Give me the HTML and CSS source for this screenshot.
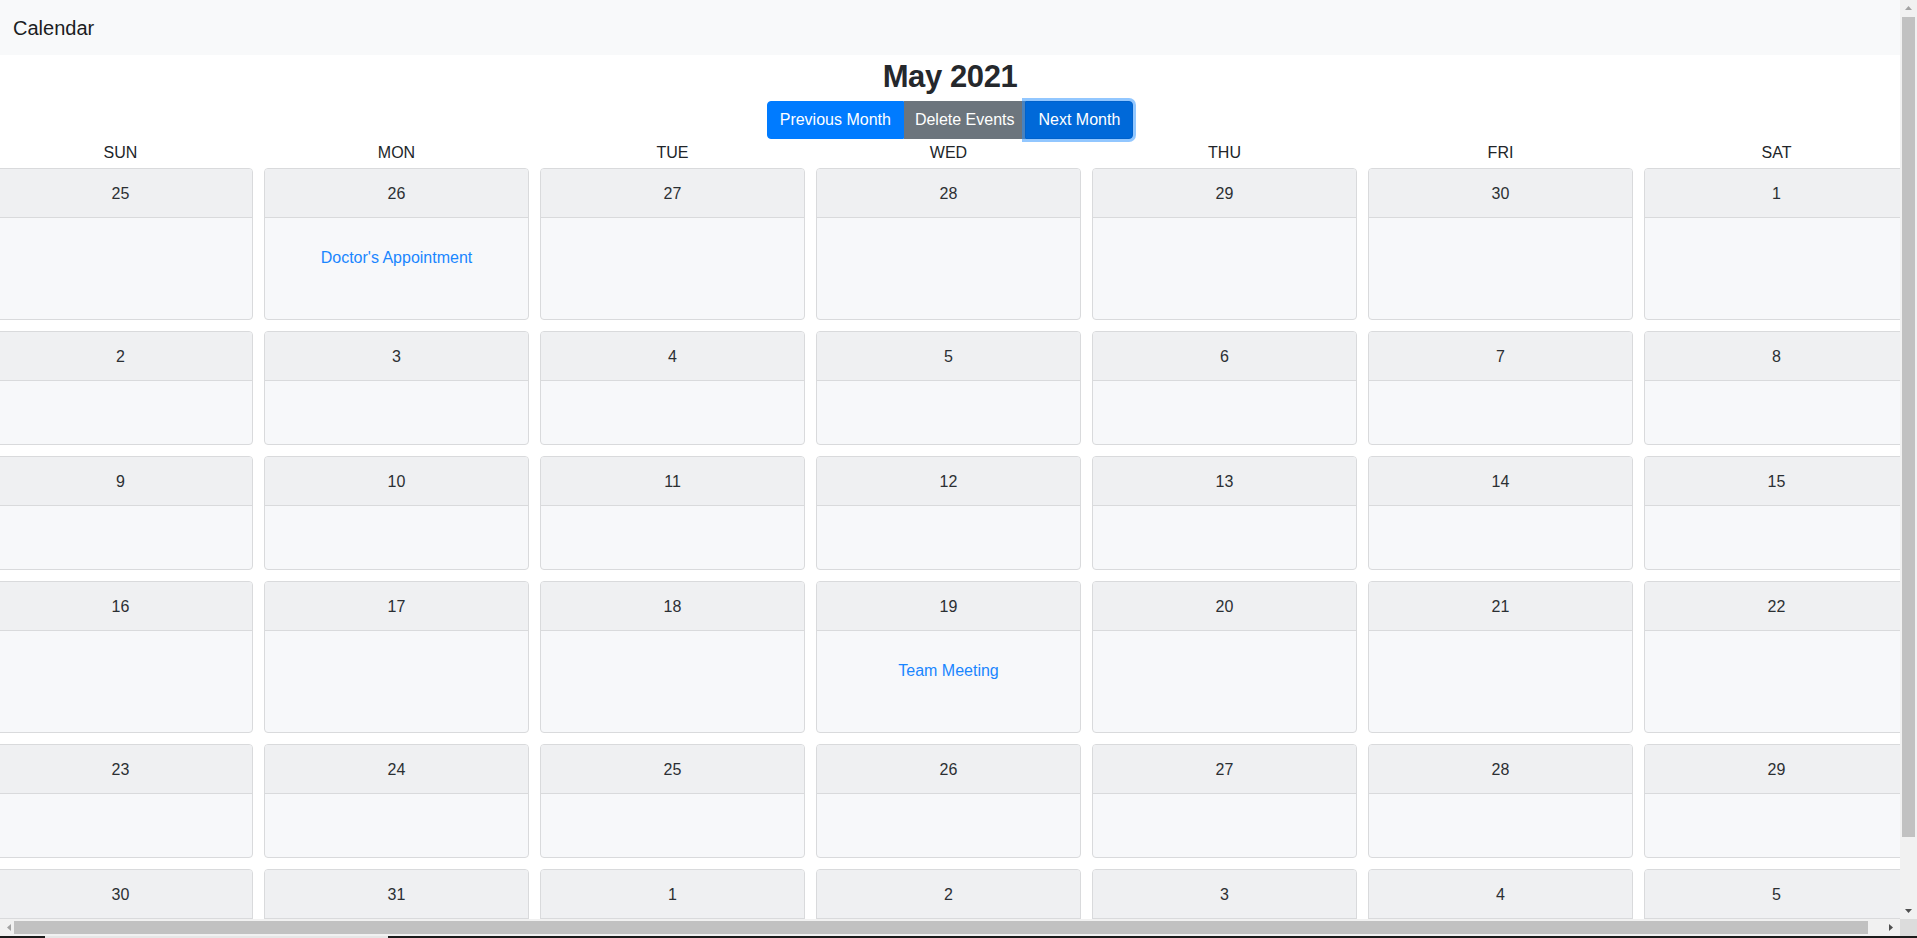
FILE: index.html
```html
<!DOCTYPE html>
<html lang="en">
<head>
<meta charset="utf-8">
<title>Calendar</title>
<link rel="stylesheet" href="styles.css">
</head>
<body>
<div class="page">
  <nav class="navbar"><span class="brand">Calendar</span></nav>
  <h1 class="title">May 2021</h1>
  <div class="btn-group">
    <button class="btn btn-primary first">Previous Month</button>
    <button class="btn btn-secondary">Delete Events</button>
    <button class="btn btn-focus last">Next Month</button>
  </div>
  <div class="weekdays">
    <div>SUN</div><div>MON</div><div>TUE</div><div>WED</div><div>THU</div><div>FRI</div><div>SAT</div>
  </div>
  <div class="month">
    <div class="day"><div class="day-head">25</div><div class="day-body"></div></div>
    <div class="day"><div class="day-head">26</div><div class="day-body"><div class="event">Doctor's Appointment</div></div></div>
    <div class="day"><div class="day-head">27</div><div class="day-body"></div></div>
    <div class="day"><div class="day-head">28</div><div class="day-body"></div></div>
    <div class="day"><div class="day-head">29</div><div class="day-body"></div></div>
    <div class="day"><div class="day-head">30</div><div class="day-body"></div></div>
    <div class="day"><div class="day-head">1</div><div class="day-body"></div></div>

    <div class="day"><div class="day-head">2</div><div class="day-body"></div></div>
    <div class="day"><div class="day-head">3</div><div class="day-body"></div></div>
    <div class="day"><div class="day-head">4</div><div class="day-body"></div></div>
    <div class="day"><div class="day-head">5</div><div class="day-body"></div></div>
    <div class="day"><div class="day-head">6</div><div class="day-body"></div></div>
    <div class="day"><div class="day-head">7</div><div class="day-body"></div></div>
    <div class="day"><div class="day-head">8</div><div class="day-body"></div></div>

    <div class="day"><div class="day-head">9</div><div class="day-body"></div></div>
    <div class="day"><div class="day-head">10</div><div class="day-body"></div></div>
    <div class="day"><div class="day-head">11</div><div class="day-body"></div></div>
    <div class="day"><div class="day-head">12</div><div class="day-body"></div></div>
    <div class="day"><div class="day-head">13</div><div class="day-body"></div></div>
    <div class="day"><div class="day-head">14</div><div class="day-body"></div></div>
    <div class="day"><div class="day-head">15</div><div class="day-body"></div></div>

    <div class="day"><div class="day-head">16</div><div class="day-body"></div></div>
    <div class="day"><div class="day-head">17</div><div class="day-body"></div></div>
    <div class="day"><div class="day-head">18</div><div class="day-body"></div></div>
    <div class="day"><div class="day-head">19</div><div class="day-body"><div class="event">Team Meeting</div></div></div>
    <div class="day"><div class="day-head">20</div><div class="day-body"></div></div>
    <div class="day"><div class="day-head">21</div><div class="day-body"></div></div>
    <div class="day"><div class="day-head">22</div><div class="day-body"></div></div>

    <div class="day"><div class="day-head">23</div><div class="day-body"></div></div>
    <div class="day"><div class="day-head">24</div><div class="day-body"></div></div>
    <div class="day"><div class="day-head">25</div><div class="day-body"></div></div>
    <div class="day"><div class="day-head">26</div><div class="day-body"></div></div>
    <div class="day"><div class="day-head">27</div><div class="day-body"></div></div>
    <div class="day"><div class="day-head">28</div><div class="day-body"></div></div>
    <div class="day"><div class="day-head">29</div><div class="day-body"></div></div>

    <div class="day"><div class="day-head">30</div><div class="day-body"></div></div>
    <div class="day"><div class="day-head">31</div><div class="day-body"></div></div>
    <div class="day"><div class="day-head">1</div><div class="day-body"></div></div>
    <div class="day"><div class="day-head">2</div><div class="day-body"></div></div>
    <div class="day"><div class="day-head">3</div><div class="day-body"></div></div>
    <div class="day"><div class="day-head">4</div><div class="day-body"></div></div>
    <div class="day"><div class="day-head">5</div><div class="day-body"></div></div>
  </div>
</div>

<div class="vscroll">
  <div class="sb-btn"><svg width="17" height="17" viewBox="0 0 17 17"><polygon points="5,10 12,10 8.5,6" fill="#a3a3a3"/></svg></div>
  <div class="vtrack"><div class="vthumb"></div></div>
  <div class="sb-btn"><svg width="17" height="17" viewBox="0 0 17 17"><polygon points="5,7 12,7 8.5,11" fill="#505050"/></svg></div>
</div>
<div class="hscroll">
  <div class="sb-btn"><svg width="17" height="17" viewBox="0 0 17 17"><polygon points="7,8.5 11,5 11,12" fill="#a3a3a3"/></svg></div>
  <div class="htrack"><div class="hthumb"></div></div>
  <div class="sb-btn"><svg width="17" height="17" viewBox="0 0 17 17"><polygon points="10,8.5 6,5 6,12" fill="#505050"/></svg></div>
</div>
<div class="corner"></div>
<div class="taskstrip"><div class="task-seg"></div></div>
</body>
</html>
```

FILE: styles.css
```css
html, body {
  margin: 0;
  padding: 0;
  overflow: hidden;
  background: #ffffff;
}

body {
  font-family: "Liberation Sans", Arial, sans-serif;
  font-size: 16px;
  line-height: 24px;
  color: #212529;
}

.page {
  width: 1900px;
}

.navbar {
  height: 55px;
  background: #f8f9fa;
  padding: 0 13px;
  display: flex;
  align-items: center;
}

.brand {
  font-size: 20px;
  line-height: 30px;
  color: #1b1d1f;
}

.title {
  margin: 0 0 5px 0;
  padding-top: 3px;
  font-size: 31px;
  line-height: 38px;
  font-weight: 700;
  text-align: center;
  letter-spacing: -0.4px;
  color: #25282c;
}

.btn-group {
  display: flex;
  justify-content: center;
  height: 38px;
  margin-bottom: 1px;
}

.btn {
  font-family: "Liberation Sans", Arial, sans-serif;
  font-size: 16px;
  line-height: 24px;
  padding: 6px 12px;
  border: 1px solid transparent;
  color: #ffffff;
  border-radius: 0;
  margin: 0;
  cursor: pointer;
}

.btn.first {
  border-radius: 4px 0 0 4px;
}

.btn.last {
  border-radius: 0 4px 4px 0;
}

.btn-primary {
  background: #007bff;
  border-color: #007bff;
}

.btn-secondary {
  background: #6c757d;
  border-color: #6c757d;
  padding: 6px 10px;
}

.btn-focus {
  background: #0069d9;
  border-color: #0062cc;
  box-shadow: 0 0 0 3px rgba(38, 143, 255, 0.5);
  border-radius: 4px;
  position: relative;
}

.weekdays {
  display: grid;
  grid-template-columns: repeat(7, 265px);
  column-gap: 11px;
  margin-left: -12px;
  padding-top: 1px;
  margin-bottom: 3px;
  text-align: center;
  line-height: 24px;
  color: #212529;
}

.month {
  display: grid;
  grid-template-columns: repeat(7, 265px);
  column-gap: 11px;
  row-gap: 11px;
  margin-left: -12px;
  align-items: stretch;
}

.day {
  display: flex;
  flex-direction: column;
  border: 1px solid #d9dadc;
  border-radius: 4px;
  background: #f7f8fa;
  overflow: hidden;
}

.day-head {
  background: #eff0f2;
  border-bottom: 1px solid #d9dadc;
  padding: 13px 20px 11px;
  line-height: 24px;
  text-align: center;
  color: #2b2f33;
}

.day-body {
  flex: 1;
  min-height: 63px;
  box-sizing: border-box;
  padding: 20px;
  text-align: center;
}

.event {
  padding-top: 8px;
  padding-bottom: 29px;
  line-height: 24px;
  color: #1a86ff;
}

/* Fake window scrollbars (overlay the viewport edges) */
.vscroll {
  position: fixed;
  top: 0;
  left: 1900px;
  width: 17px;
  height: 919px;
  background: #f1f1f1;
  display: flex;
  flex-direction: column;
}

.sb-btn {
  width: 17px;
  height: 17px;
  flex: 0 0 17px;
}

.sb-btn svg {
  display: block;
}

.vtrack {
  flex: 1;
  position: relative;
}

.vthumb {
  position: absolute;
  left: 2px;
  right: 2px;
  top: 0;
  height: 820px;
  background: #c1c1c1;
}

.hscroll {
  position: fixed;
  top: 919px;
  left: 0;
  width: 1900px;
  height: 17px;
  background: #f1f1f1;
  display: flex;
}

.htrack {
  flex: 1;
  position: relative;
}

.hthumb {
  position: absolute;
  top: 2px;
  bottom: 2px;
  left: -3px;
  width: 1854px;
  background: #c1c1c1;
}

.corner {
  position: fixed;
  top: 919px;
  left: 1900px;
  width: 17px;
  height: 17px;
  background: #dcdcdc;
}

.taskstrip {
  position: fixed;
  top: 936px;
  left: 0;
  width: 1917px;
  height: 2px;
  background: #1b1b1b;
}

.task-seg {
  position: absolute;
  left: 45px;
  width: 343px;
  top: 0;
  height: 2px;
  background: #e6e6e6;
}
```
